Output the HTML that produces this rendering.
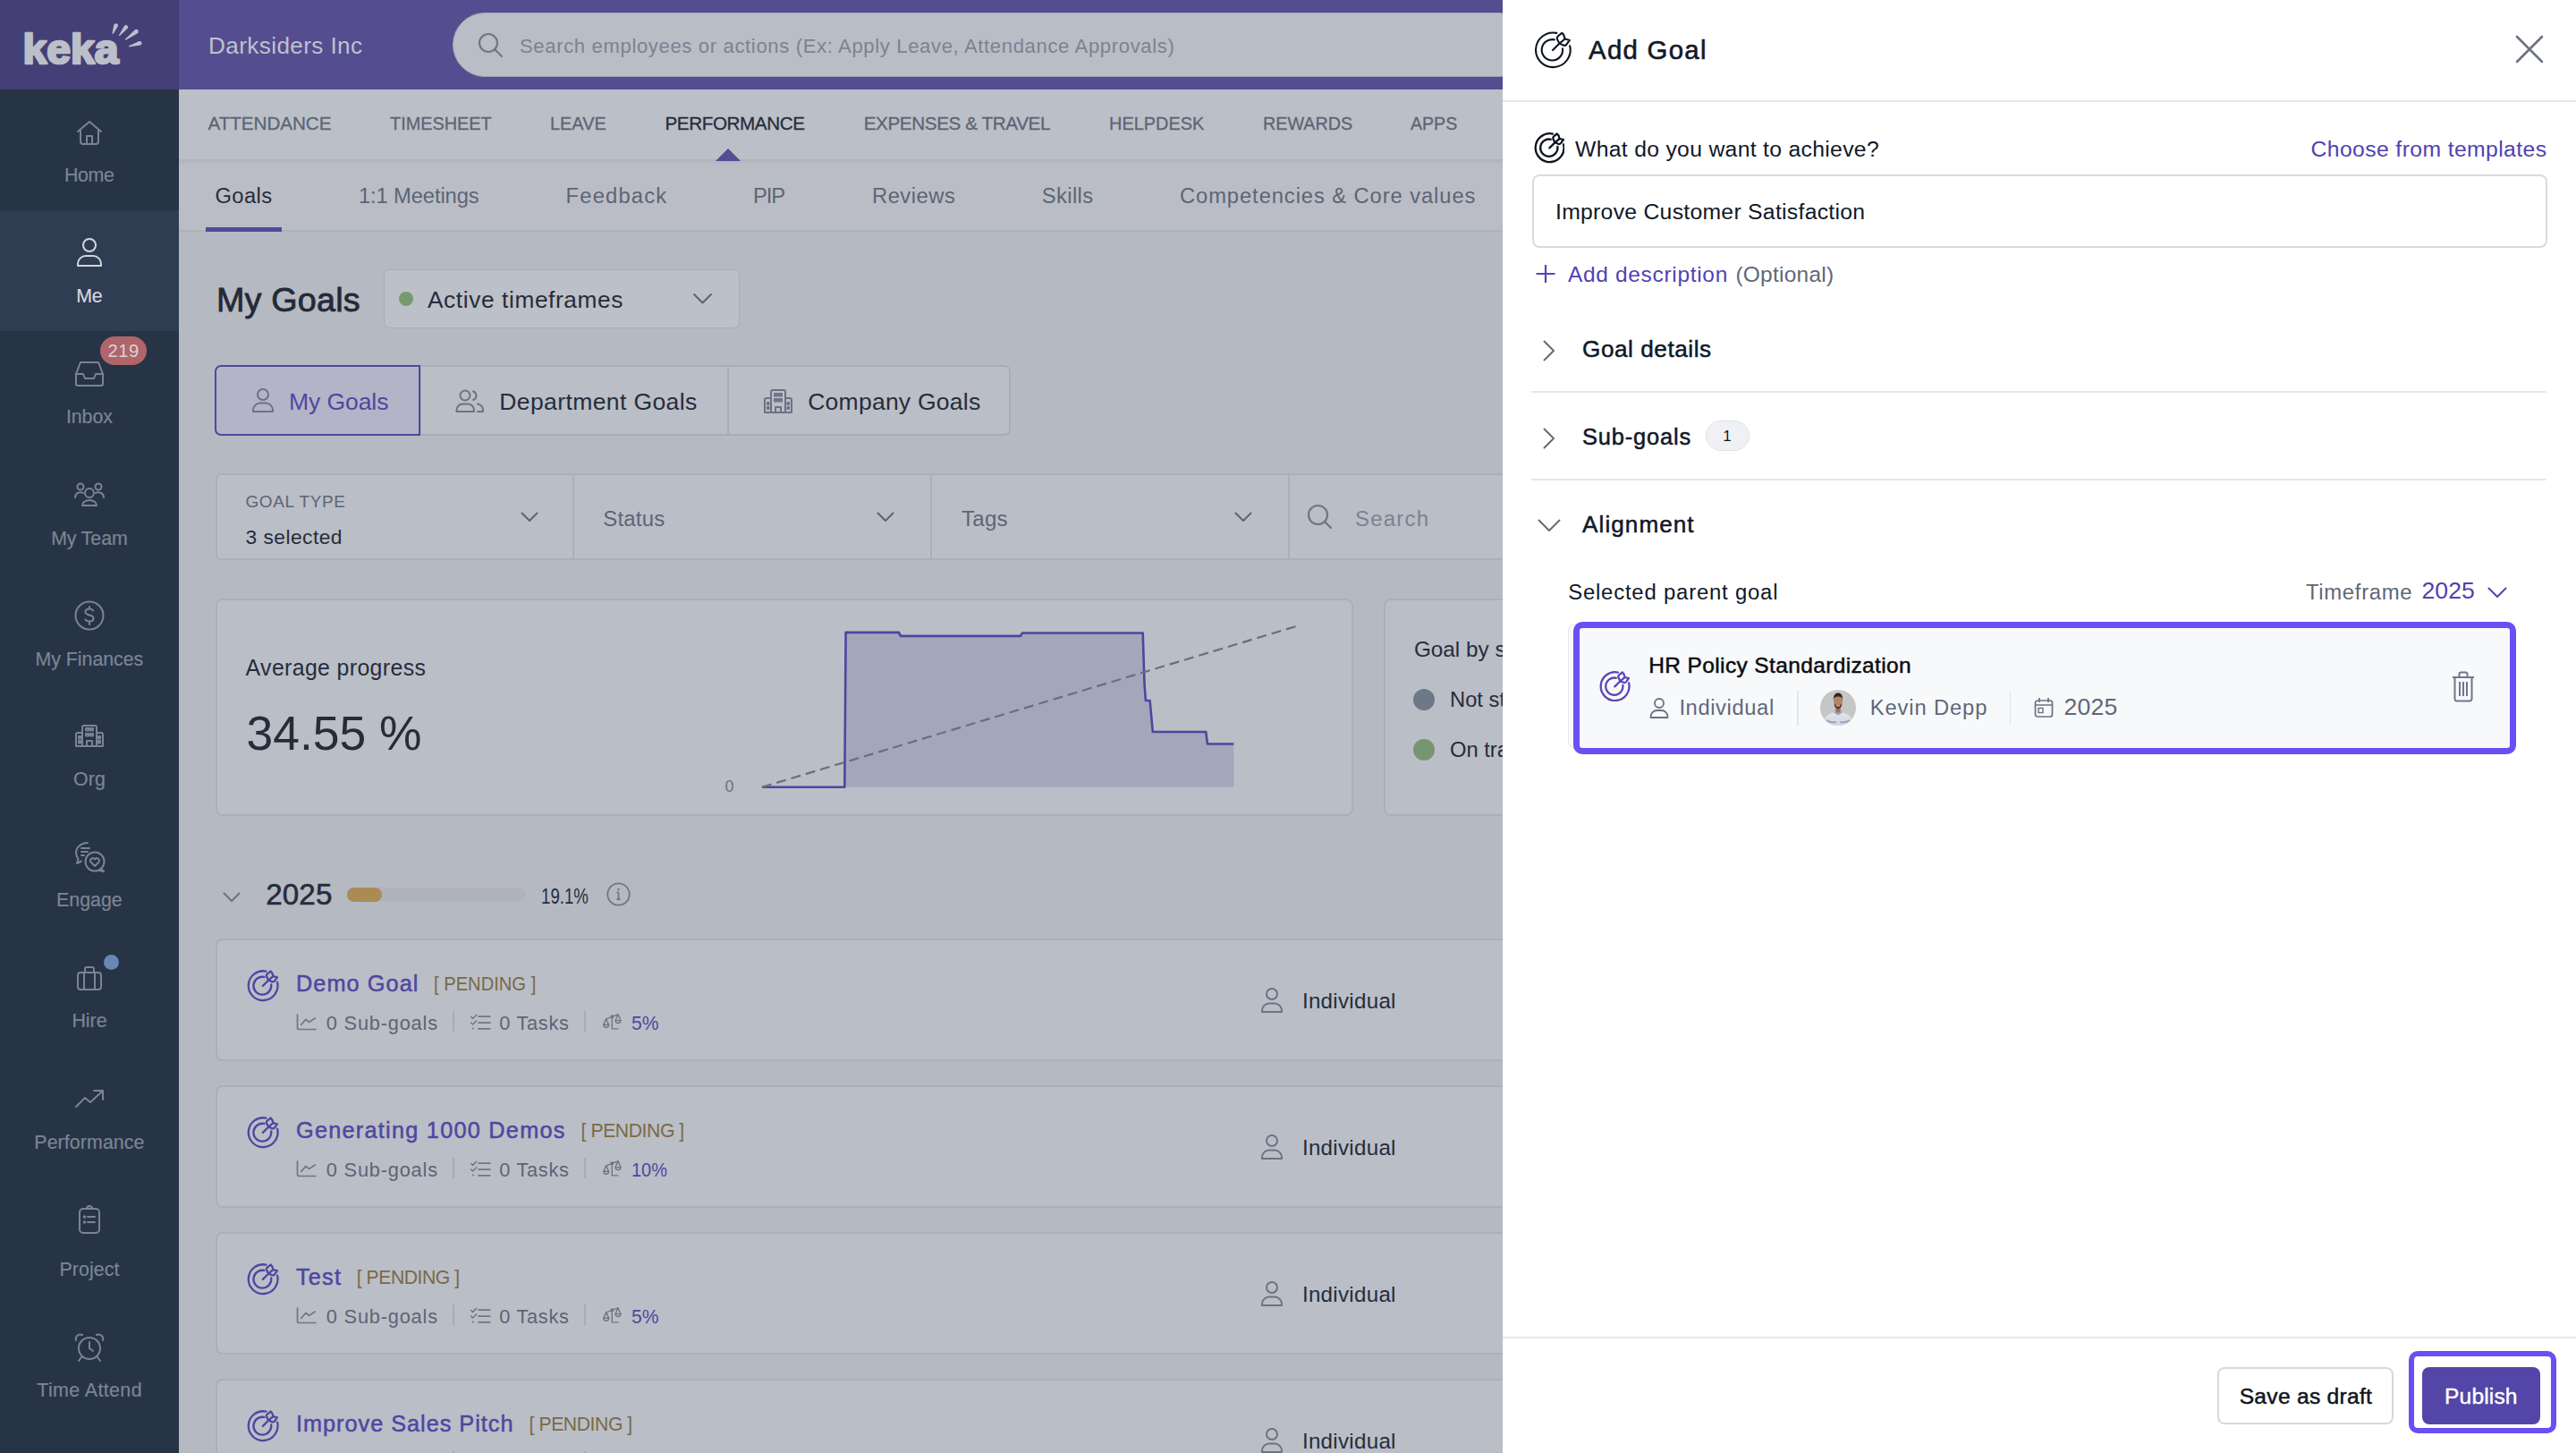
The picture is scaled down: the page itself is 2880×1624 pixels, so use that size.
<!DOCTYPE html><html><head><meta charset="utf-8"><style>
html,body{margin:0;padding:0;}
body{width:2880px;height:1624px;overflow:hidden;position:relative;background:#b5b9c2;font-family:"Liberation Sans",sans-serif;}
.t{position:absolute;white-space:nowrap;}
.b{position:absolute;box-sizing:border-box;}
@media (max-width:2000px){html{zoom:0.5;}}
</style></head><body>
<div class="b" style="left:0px;top:0px;width:2880px;height:100px;background:#544d90"></div>
<div class="b" style="left:0px;top:0px;width:200px;height:100px;background:#443f77"></div>
<div class="b" style="left:0px;top:100px;width:200px;height:1524px;background:#273446"></div>
<div class="b" style="left:0px;top:235px;width:200px;height:135px;background:#2e3d52"></div>
<svg class="b" style="left:0px;top:0px;" width="200" height="100" viewBox="0 0 200 100" fill="none"><text x="25.5" y="71" font-family="Liberation Sans" font-weight="700" font-size="46" fill="#bcbfc9" stroke="#bcbfc9" stroke-width="2.6" stroke-linejoin="round" textLength="107" lengthAdjust="spacingAndGlyphs">keka</text><path d="M126.56 37.92 L131.76 29.61 A2.4 2.4 0 0 0 127.29 27.86 L125.44 37.48 Z" fill="#bcbfc9"/><path d="M133.67 40.37 L142.69 31.87 A2.4 2.4 0 0 0 138.93 28.89 L132.73 39.63 Z" fill="#bcbfc9"/><path d="M140.46 45.08 L153.84 37.16 A2.4 2.4 0 0 0 150.94 33.34 L139.74 44.12 Z" fill="#bcbfc9"/><path d="M144.17 52.57 L156.90 50.59 A2.4 2.4 0 0 0 155.51 46.00 L143.83 51.43 Z" fill="#bcbfc9"/></svg>
<div class="t" style="left:233.00px;top:33.95px;font-size:26.12px;line-height:34px;color:#bfc2cb;letter-spacing:0.400px;">Darksiders Inc</div>
<div class="t" style="left:72.00px;top:181.60px;font-size:21.37px;line-height:28px;color:#7c8595;letter-spacing:-0.367px;-webkit-text-stroke:0.2px #7c8595;">Home</div>
<svg class="b" style="left:85px;top:134px;" width="30" height="28" viewBox="0 0 30 28" fill="none"><g stroke="#7a8494" stroke-width="2" stroke-linecap="round" stroke-linejoin="round"><path d="M2 13 L15 2 L28 13" /><path d="M5 11 V24 a3 3 0 0 0 3 3 H22 a3 3 0 0 0 3-3 V11"/><path d="M12 27 V18 H18 V27"/></g></svg>
<div class="t" style="left:85.25px;top:316.60px;font-size:21.37px;line-height:28px;color:#d3d6dc;letter-spacing:-0.200px;-webkit-text-stroke:0.2px #d3d6dc;">Me</div>
<svg class="b" style="left:85px;top:266px;" width="30" height="33" viewBox="0 0 30 33" fill="none"><g stroke="#d3d6dc" stroke-width="2" stroke-linecap="round" stroke-linejoin="round"><circle cx="15" cy="8" r="7"/><path d="M2 31 V29 a9 9 0 0 1 9-9 H19 a9 9 0 0 1 9 9 V31 Z"/></g></svg>
<div class="t" style="left:74.00px;top:451.60px;font-size:21.37px;line-height:28px;color:#7c8595;letter-spacing:-0.100px;-webkit-text-stroke:0.2px #7c8595;">Inbox</div>
<svg class="b" style="left:83px;top:403px;" width="34" height="30" viewBox="0 0 34 30" fill="none"><g stroke="#7a8494" stroke-width="2" stroke-linecap="round" stroke-linejoin="round"><path d="M7 2 H27 L32 15 V26 a2 2 0 0 1-2 2 H4 a2 2 0 0 1-2-2 V15 Z"/><path d="M2 15 H10 L12 20 H22 L24 15 H32"/></g></svg>
<div class="t" style="left:57.15px;top:587.60px;font-size:21.37px;line-height:28px;color:#7c8595;letter-spacing:-0.117px;-webkit-text-stroke:0.2px #7c8595;">My Team</div>
<svg class="b" style="left:83px;top:539px;" width="34" height="28" viewBox="0 0 34 28" fill="none"><g stroke="#7a8494" stroke-width="2" stroke-linecap="round" stroke-linejoin="round"><circle cx="17" cy="12" r="5"/><path d="M9 26 a8 6 0 0 1 16 0 Z"/><circle cx="7" cy="5" r="3.5"/><circle cx="27" cy="5" r="3.5"/><path d="M1 17 a6 6 0 0 1 9-5"/><path d="M33 17 a6 6 0 0 0-9-5"/></g></svg>
<div class="t" style="left:39.50px;top:722.60px;font-size:21.37px;line-height:28px;color:#7c8595;letter-spacing:-0.030px;-webkit-text-stroke:0.2px #7c8595;">My Finances</div>
<svg class="b" style="left:83px;top:671px;" width="34" height="34" viewBox="0 0 34 34" fill="none"><g stroke="#7a8494" stroke-width="2" stroke-linecap="round" stroke-linejoin="round"><circle cx="17" cy="17" r="15.5"/><path d="M21 11.5 a4 3.5 0 0 0-4-2 c-3 0-4.5 1.5-4.5 3.5 c0 4.5 9 2.5 9 7 c0 2-1.7 3.5-4.5 3.5 a4.5 3.5 0 0 1-4.5-2.2"/><path d="M17 7 V9.5 M17 24 V27"/></g></svg>
<div class="t" style="left:81.90px;top:856.60px;font-size:21.37px;line-height:28px;color:#7c8595;letter-spacing:0.250px;-webkit-text-stroke:0.2px #7c8595;">Org</div>
<svg class="b" style="left:84px;top:809px;" width="32" height="27" viewBox="0 0 32 27" fill="none"><g stroke="#7a8494" stroke-width="2" stroke-linecap="round" stroke-linejoin="round"><path d="M8 25 V4 a2 2 0 0 1 2-2 H22 a2 2 0 0 1 2 2 V25"/><path d="M8 10 H3 a2 2 0 0 0-2 2 V25 H31 V12 a2 2 0 0 0-2-2 H24"/><rect x="12" y="5" width="3" height="2.5"/><rect x="17" y="5" width="3" height="2.5"/><rect x="12" y="11" width="3" height="2.5"/><rect x="17" y="11" width="3" height="2.5"/><rect x="4" y="14" width="2" height="2.5"/><rect x="26" y="14" width="2" height="2.5"/><rect x="4" y="19" width="2" height="2.5"/><rect x="26" y="19" width="2" height="2.5"/><path d="M13 25 V19 H19 V25"/></g></svg>
<div class="t" style="left:63.10px;top:991.60px;font-size:21.37px;line-height:28px;color:#7c8595;letter-spacing:0.000px;-webkit-text-stroke:0.2px #7c8595;">Engage</div>
<svg class="b" style="left:82px;top:939px;" width="36" height="37" viewBox="0 0 36 37" fill="none"><g stroke="#7a8494" stroke-width="2" stroke-linecap="round" stroke-linejoin="round"><path d="M16 3 a13 11 0 0 0-13 11 c0 3 1 5 2.5 7 L4 26 L9 23.5"/><path d="M9 9 H18 M9 13 H16 M9 17 H12"/><circle cx="24" cy="24" r="10.5"/><path d="M31 32 L34 35 L29 34"/><path d="M24 29 l-4.5-4.5 a2.6 2.6 0 0 1 4.5-3 a2.6 2.6 0 0 1 4.5 3 Z"/></g></svg>
<div class="t" style="left:80.40px;top:1126.60px;font-size:21.37px;line-height:28px;color:#7c8595;letter-spacing:0.000px;-webkit-text-stroke:0.2px #7c8595;">Hire</div>
<svg class="b" style="left:85px;top:1079px;" width="30" height="28" viewBox="0 0 30 28" fill="none"><g stroke="#7a8494" stroke-width="2" stroke-linecap="round" stroke-linejoin="round"><rect x="2" y="8" width="26" height="19" rx="3"/><path d="M10 8 V4 a2 2 0 0 1 2-2 H18 a2 2 0 0 1 2 2 V8"/><path d="M9 8 V27 M21 8 V27"/></g></svg>
<div class="t" style="left:38.30px;top:1262.60px;font-size:21.37px;line-height:28px;color:#7c8595;letter-spacing:0.090px;-webkit-text-stroke:0.2px #7c8595;">Performance</div>
<svg class="b" style="left:83px;top:1217px;" width="34" height="22" viewBox="0 0 34 22" fill="none"><g stroke="#7a8494" stroke-width="2" stroke-linecap="round" stroke-linejoin="round"><path d="M2 20 L12 10 L18 15 L31 3"/><path d="M22 2 H32 V12"/></g></svg>
<div class="t" style="left:66.50px;top:1404.60px;font-size:21.37px;line-height:28px;color:#7c8595;letter-spacing:0.067px;-webkit-text-stroke:0.2px #7c8595;">Project</div>
<svg class="b" style="left:87px;top:1346px;" width="26" height="34" viewBox="0 0 26 34" fill="none"><g stroke="#7a8494" stroke-width="2" stroke-linecap="round" stroke-linejoin="round"><rect x="2" y="5" width="22" height="27" rx="4"/><path d="M9 5 H17 M10 5 a3 3 0 0 1 6 0"/><circle cx="7.5" cy="14" r="0.8"/><circle cx="7.5" cy="20" r="0.8"/><path d="M11 14 H19 M11 20 H19"/></g></svg>
<div class="t" style="left:41.25px;top:1539.60px;font-size:21.37px;line-height:28px;color:#7c8595;letter-spacing:0.410px;-webkit-text-stroke:0.2px #7c8595;">Time Attend</div>
<svg class="b" style="left:83px;top:1489px;" width="34" height="34" viewBox="0 0 34 34" fill="none"><g stroke="#7a8494" stroke-width="2" stroke-linecap="round" stroke-linejoin="round"><circle cx="17" cy="18" r="12"/><path d="M17 11 V18 L21 21"/><path d="M2 9 a5 5 0 0 1 7-6"/><path d="M32 9 a5 5 0 0 0-7-6"/><path d="M8 28 L5 32 M26 28 L29 32"/></g></svg>
<div class="b" style="left:112px;top:376px;width:52px;height:32px;background:#b0656a;border-radius:16px"></div>
<div class="t" style="left:120.50px;top:378.98px;font-size:20.25px;line-height:26px;color:#d8d3d6;letter-spacing:0.550px;">219</div>
<div class="b" style="left:116px;top:1067px;width:17px;height:17px;background:#6787b5;border-radius:50%"></div>
<div class="b" style="left:506px;top:14px;width:1206px;height:72px;background:#b9bdc6;border-radius:36px;border:1.5px solid #a3a6b2"></div>
<svg class="b" style="left:534px;top:36px;" width="30" height="30" viewBox="0 0 30 30" fill="none"><circle cx="12" cy="12" r="10" stroke="#6f7786" stroke-width="2.2"/><path d="M19.5 19.5 L27 27" stroke="#6f7786" stroke-width="2.2" stroke-linecap="round"/></svg>
<div class="t" style="left:581.00px;top:37.45px;font-size:22.07px;line-height:29px;color:#7b8392;letter-spacing:0.645px;">Search employees or actions (Ex: Apply Leave, Attendance Approvals)</div>
<div class="b" style="left:200px;top:100px;width:1480px;height:78px;background:#bbbfc7"></div>
<div class="b" style="left:200px;top:178px;width:1480px;height:81px;background:#babdc6;border-bottom:2px solid #adb1ba"></div>
<div class="b" style="left:200px;top:178px;width:1480px;height:6px;background:linear-gradient(#aeb2bb,rgba(186,189,198,0))"></div>
<div class="t" style="left:232.60px;top:124.44px;font-size:20.67px;line-height:27px;color:#5c6575;letter-spacing:-0.067px;-webkit-text-stroke:0.3px #5c6575;">ATTENDANCE</div>
<div class="t" style="left:436.00px;top:124.44px;font-size:20.67px;line-height:27px;color:#5c6575;letter-spacing:0.000px;-webkit-text-stroke:0.3px #5c6575;transform:scaleX(0.9620);transform-origin:0 0;">TIMESHEET</div>
<div class="t" style="left:615.20px;top:124.44px;font-size:20.67px;line-height:27px;color:#5c6575;letter-spacing:0.000px;-webkit-text-stroke:0.3px #5c6575;transform:scaleX(0.9632);transform-origin:0 0;">LEAVE</div>
<div class="t" style="left:743.50px;top:124.44px;font-size:20.67px;line-height:27px;color:#262d3a;letter-spacing:-0.420px;-webkit-text-stroke:0.3px #262d3a;">PERFORMANCE</div>
<div class="t" style="left:965.70px;top:124.44px;font-size:20.67px;line-height:27px;color:#5c6575;letter-spacing:-0.394px;-webkit-text-stroke:0.3px #5c6575;">EXPENSES & TRAVEL</div>
<div class="t" style="left:1240.00px;top:124.44px;font-size:20.67px;line-height:27px;color:#5c6575;letter-spacing:0.000px;-webkit-text-stroke:0.3px #5c6575;transform:scaleX(0.9638);transform-origin:0 0;">HELPDESK</div>
<div class="t" style="left:1411.60px;top:124.44px;font-size:20.67px;line-height:27px;color:#5c6575;letter-spacing:0.000px;-webkit-text-stroke:0.3px #5c6575;transform:scaleX(0.9562);transform-origin:0 0;">REWARDS</div>
<div class="t" style="left:1577.00px;top:124.44px;font-size:20.67px;line-height:27px;color:#5c6575;letter-spacing:0.000px;-webkit-text-stroke:0.3px #5c6575;transform:scaleX(0.9475);transform-origin:0 0;">APPS</div>
<svg class="b" style="left:800px;top:166px;" width="28" height="14" viewBox="0 0 28 14" fill="none"><path d="M0 14 L14 0 L28 14 Z" fill="#544d90"/></svg>
<div class="t" style="left:240.40px;top:203.57px;font-size:23.74px;line-height:31px;color:#262d3a;letter-spacing:0.425px">Goals</div>
<div class="t" style="left:401.00px;top:203.57px;font-size:23.74px;line-height:31px;color:#5c6575;letter-spacing:-0.118px">1:1 Meetings</div>
<div class="t" style="left:632.60px;top:203.57px;font-size:23.74px;line-height:31px;color:#5c6575;letter-spacing:1.186px">Feedback</div>
<div class="t" style="left:842.00px;top:203.57px;font-size:23.74px;line-height:31px;color:#5c6575;letter-spacing:-1.100px">PIP</div>
<div class="t" style="left:975.00px;top:203.57px;font-size:23.74px;line-height:31px;color:#5c6575;letter-spacing:0.517px">Reviews</div>
<div class="t" style="left:1164.80px;top:203.57px;font-size:23.74px;line-height:31px;color:#5c6575;letter-spacing:0.380px">Skills</div>
<div class="t" style="left:1319.00px;top:203.57px;font-size:23.74px;line-height:31px;color:#5c6575;letter-spacing:0.920px">Competencies &amp; Core values</div>
<div class="b" style="left:230px;top:254px;width:85px;height:5px;background:#514a9c"></div>
<div class="t" style="left:242.00px;top:311.03px;font-size:37.71px;line-height:49px;color:#232a37;letter-spacing:0.200px;-webkit-text-stroke:0.8px #232a37;">My Goals</div>
<div class="b" style="left:429px;top:301px;width:398px;height:66px;background:#bcc0c8;border:1.5px solid #a9adb6;border-radius:6px"></div>
<div class="b" style="left:446px;top:326px;width:16px;height:16px;background:#789a6f;border-radius:50%"></div>
<div class="t" style="left:478.00px;top:318.00px;font-size:26.26px;line-height:34px;color:#262d3a;letter-spacing:0.613px;">Active timeframes</div>
<svg class="b" style="left:774px;top:327px;" width="23" height="14" viewBox="0 0 23 14" fill="none"><path d="M2 2 L11.5 11.5 L21 2" stroke="#5c6575" stroke-width="2" stroke-linecap="round" stroke-linejoin="round"/></svg>
<div class="b" style="left:240px;top:408px;width:890px;height:79px;background:#babec7;border:2px solid #a9adb6;border-radius:7px"></div>
<div class="b" style="left:469px;top:410px;width:1.5px;height:75px;background:#a9adb6"></div>
<div class="b" style="left:813px;top:410px;width:1.5px;height:75px;background:#a9adb6"></div>
<div class="b" style="left:240px;top:408px;width:230px;height:79px;background:#b3b4c7;border:2px solid #4f479f;border-radius:7px 0 0 7px"></div>
<svg class="b" style="left:281px;top:434px;" width="26" height="27" viewBox="0 0 26 27" fill="none"><circle cx="13" cy="7" r="6" stroke="#6c7282" stroke-width="2"/><path d="M2 26 V24.5 a8 8 0 0 1 8-8 H16 a8 8 0 0 1 8 8 V26 Z" stroke="#6c7282" stroke-width="2" stroke-linejoin="round"/></svg>
<div class="t" style="left:322.90px;top:432.31px;font-size:26.54px;line-height:34px;color:#4e47a0;letter-spacing:-0.071px;">My Goals</div>
<svg class="b" style="left:509px;top:435px;" width="33" height="26" viewBox="0 0 33 26" fill="none"><circle cx="11" cy="7" r="5.5" stroke="#6c7282" stroke-width="2"/><path d="M1.5 25 V23.5 a7 7 0 0 1 7-7 H14 a7 7 0 0 1 7 7 V25 Z" stroke="#6c7282" stroke-width="2" stroke-linejoin="round"/><path d="M20 2.5 a5 5 0 0 1 0 9.5" stroke="#6c7282" stroke-width="2" stroke-linecap="round"/><path d="M25 16.5 a7 7 0 0 1 6 7 V25 H25" stroke="#6c7282" stroke-width="2" stroke-linecap="round" stroke-linejoin="round"/></svg>
<div class="t" style="left:558.20px;top:432.31px;font-size:26.54px;line-height:34px;color:#262d3a;letter-spacing:0.387px;">Department Goals</div>
<svg class="b" style="left:854px;top:434px;" width="32" height="28" viewBox="0 0 32 28" fill="none"><g stroke="#6c7282" stroke-width="2" stroke-linejoin="round"><path d="M8 27 V4 a2 2 0 0 1 2-2 H22 a2 2 0 0 1 2 2 V27"/><path d="M8 11 H3 a2 2 0 0 0-2 2 V27 H31 V13 a2 2 0 0 0-2-2 H24"/><rect x="12" y="6" width="3" height="2.5"/><rect x="17" y="6" width="3" height="2.5"/><rect x="12" y="12" width="3" height="2.5"/><rect x="17" y="12" width="3" height="2.5"/><rect x="4" y="16" width="1.5" height="2"/><rect x="26.5" y="16" width="1.5" height="2"/><rect x="4" y="21" width="1.5" height="2"/><rect x="26.5" y="21" width="1.5" height="2"/><path d="M13 27 V21 H19 V27"/></g></svg>
<div class="t" style="left:903.20px;top:432.31px;font-size:26.54px;line-height:34px;color:#262d3a;letter-spacing:0.233px;">Company Goals</div>
<div class="b" style="left:241px;top:529px;width:1500px;height:97px;background:#babec7;border:2px solid #abafb8;border-radius:6px"></div>
<div class="b" style="left:640px;top:531px;width:1.5px;height:93px;background:#abafb8"></div>
<div class="b" style="left:1040px;top:531px;width:1.5px;height:93px;background:#abafb8"></div>
<div class="b" style="left:1440px;top:531px;width:1.5px;height:93px;background:#abafb8"></div>
<div class="t" style="left:274.50px;top:548.42px;font-size:18.99px;line-height:25px;color:#5c6575;letter-spacing:0.600px;">GOAL TYPE</div>
<div class="t" style="left:274.50px;top:584.61px;font-size:22.77px;line-height:30px;color:#262d3a;letter-spacing:0.467px;">3 selected</div>
<svg class="b" style="left:582px;top:572px;" width="20" height="12" viewBox="0 0 20 12" fill="none"><path d="M1.5 1.5 L10 10 L18.5 1.5" stroke="#5c6575" stroke-width="2" stroke-linecap="round" stroke-linejoin="round"/></svg>
<div class="t" style="left:674.20px;top:563.98px;font-size:24.02px;line-height:31px;color:#5c6575;letter-spacing:0.200px;">Status</div>
<svg class="b" style="left:980px;top:572px;" width="20" height="12" viewBox="0 0 20 12" fill="none"><path d="M1.5 1.5 L10 10 L18.5 1.5" stroke="#5c6575" stroke-width="2" stroke-linecap="round" stroke-linejoin="round"/></svg>
<div class="t" style="left:1075.00px;top:563.98px;font-size:24.02px;line-height:31px;color:#5c6575;letter-spacing:0.267px;">Tags</div>
<svg class="b" style="left:1380px;top:572px;" width="20" height="12" viewBox="0 0 20 12" fill="none"><path d="M1.5 1.5 L10 10 L18.5 1.5" stroke="#5c6575" stroke-width="2" stroke-linecap="round" stroke-linejoin="round"/></svg>
<svg class="b" style="left:1461px;top:563px;" width="30" height="30" viewBox="0 0 30 30" fill="none"><circle cx="12.5" cy="12.5" r="10.5" stroke="#6f7786" stroke-width="2.2"/><path d="M20 20 L27 27" stroke="#6f7786" stroke-width="2.2" stroke-linecap="round"/></svg>
<div class="t" style="left:1515.00px;top:563.98px;font-size:24.02px;line-height:31px;color:#7b8392;letter-spacing:1.200px;">Search</div>
<div class="b" style="left:241px;top:669px;width:1272px;height:243px;background:#babec7;border:2px solid #abafb8;border-radius:8px"></div>
<div class="b" style="left:1547px;top:669px;width:400px;height:243px;background:#babec7;border:2px solid #abafb8;border-radius:8px"></div>
<div class="t" style="left:274.60px;top:730.39px;font-size:24.86px;line-height:32px;color:#262d3a;letter-spacing:0.367px;">Average progress</div>
<div class="t" style="left:275.60px;top:785.20px;font-size:53.40px;line-height:69px;color:#262d3a;letter-spacing:-0.017px;">34.55 %</div>
<div class="t" style="left:810.60px;top:868.01px;font-size:17.88px;line-height:23px;color:#6b7280;letter-spacing:0.000px;">0</div>
<svg class="b" style="left:0px;top:0px;" width="1600" height="1000" viewBox="0 0 1600 1000" fill="none"><polygon points="944.3,879.8 944.3,879.8 945.6,706.9 1005,706.9 1006.8,710.9 1141,710.9 1143,707.5 1277.7,707.5 1279.5,764.5 1280.9,783 1285.6,783 1288.8,818 1348.2,818 1350,831.5 1379.3,831.5 1379.3,879.8" fill="#a4a6ba"/><polyline points="851.9,879.8 944.3,879.8 945.6,706.9 1005,706.9 1006.8,710.9 1141,710.9 1143,707.5 1277.7,707.5 1279.5,764.5 1280.9,783 1285.6,783 1288.8,818 1348.2,818 1350,831.5 1379.3,831.5" stroke="#4d469f" stroke-width="2.6" fill="none" stroke-linejoin="round"/><line x1="851.9" y1="879.8" x2="1449.8" y2="699.8" stroke="#6a6f7b" stroke-width="2.2" stroke-dasharray="11 6"/></svg>
<div class="t" style="left:1580.90px;top:710.38px;font-size:24.30px;line-height:32px;color:#262d3a;letter-spacing:0.000px;">Goal by status</div>
<div class="b" style="left:1580px;top:770px;width:24px;height:24px;background:#6f7889;border-radius:50%"></div>
<div class="t" style="left:1621.00px;top:767.47px;font-size:23.74px;line-height:31px;color:#262d3a;letter-spacing:0.000px;">Not started</div>
<div class="b" style="left:1580px;top:826px;width:24px;height:24px;background:#769671;border-radius:50%"></div>
<div class="t" style="left:1621.00px;top:823.27px;font-size:23.74px;line-height:31px;color:#262d3a;letter-spacing:0.000px;">On track</div>
<svg class="b" style="left:249px;top:997px;" width="20" height="12" viewBox="0 0 20 12" fill="none"><path d="M1.5 1.5 L10 10 L18.5 1.5" stroke="#6b7382" stroke-width="2" stroke-linecap="round" stroke-linejoin="round"/></svg>
<div class="t" style="left:297.20px;top:978.01px;font-size:33.16px;line-height:43px;color:#262d3a;letter-spacing:0.133px;-webkit-text-stroke:0.6px #262d3a;">2025</div>
<div class="b" style="left:388px;top:992px;width:200px;height:16px;background:#b0b3bc;border-radius:8px"></div>
<div class="b" style="left:388px;top:992px;width:39px;height:16px;background:#a98b53;border-radius:8px"></div>
<div class="t" style="left:605.40px;top:985.52px;font-size:23.88px;line-height:31px;color:#262d3a;letter-spacing:0.000px;transform:scaleX(0.7817);transform-origin:0 0;">19.1%</div>
<svg class="b" style="left:678px;top:986px;" width="27" height="27" viewBox="0 0 27 27" fill="none"><circle cx="13.5" cy="13.5" r="12.2" stroke="#6f7786" stroke-width="1.8"/><path d="M13.5 11.5 V19 M11.5 19 H15.5 M11.5 11.5 H13.5" stroke="#6f7786" stroke-width="1.8"/><circle cx="13.5" cy="8" r="1.2" fill="#6f7786"/></svg>
<div class="b" style="left:241px;top:1049px;width:1500px;height:137px;background:#babec7;border:2px solid #abafb8;border-radius:8px"></div>
<svg class="b" style="left:276.15px;top:1084.15px;" width="35.7" height="35.7" viewBox="-1 -1 42 42" fill="none"><g stroke="#4e47a0" stroke-width="2.706" stroke-linecap="round" stroke-linejoin="round" fill="none"><path d="M24.3 0.9 A19.3 19.3 0 1 0 39.1 15.2" /><path d="M21.8 8.4 A11.7 11.7 0 1 0 31 18.4"/><path d="M20 20 L27.6 12.5"/><path d="M27.4 12.6 L24.8 7.4 Q24.6 5.6 25.8 4.4 L30.3 0.8 L32.4 3.3 L33.6 7.5 L38.9 8.9 L35.4 13.7 Q34.3 15 32.5 14.8 L27.4 12.6 Z"/><path d="M33.6 7.5 L27.6 12.5"/></g></svg>
<div class="t" style="left:331.00px;top:1082.74px;font-size:25.28px;line-height:33px;color:#4e47a0;letter-spacing:1.075px;-webkit-text-stroke:0.5px #4e47a0;">Demo Goal</div>
<div class="t" style="left:485.40px;top:1086.44px;font-size:21.23px;line-height:28px;color:#7a6a45;letter-spacing:0.000px;transform:scaleX(0.9501);transform-origin:0 0;">[ PENDING ]</div>
<svg class="b" style="left:331px;top:1132.5px;" width="24" height="19" viewBox="0 0 24 19" fill="none"><g transform="translate(1,1)" stroke="#6f7786" fill="none" stroke-linecap="round" stroke-linejoin="round"><path d="M0.5 0 V14.5 a2 2 0 0 0 2 2 H21" stroke-width="1.7"/><path d="M4.7 11.4 L9.9 5.5 L13.6 8.4 L20.2 4" stroke-width="1.7"/></g></svg>
<div class="t" style="left:364.80px;top:1129.75px;font-size:21.79px;line-height:28px;color:#5c6575;letter-spacing:0.800px;">0 Sub-goals</div>
<div class="b" style="left:506.3px;top:1130px;width:1.3px;height:23.4px;background:#a7abb4"></div>
<svg class="b" style="left:525px;top:1132.5px;" width="24" height="19" viewBox="0 0 24 19" fill="none"><g transform="translate(1,1)" stroke="#6f7786" fill="none" stroke-linecap="round" stroke-linejoin="round"><path d="M0.7 2.5 L2.6 4.4 L6.6 0.3 M0.7 9.1 L2.6 11 L6.6 6.9" stroke-width="1.5"/><circle cx="2.9" cy="15.6" r="1" fill="#6f7786" stroke="none"/><path d="M9 2.1 H21.8 M9 9.1 H21.8 M9 15.8 H21.8" stroke-width="1.7"/></g></svg>
<div class="t" style="left:558.30px;top:1129.75px;font-size:21.79px;line-height:28px;color:#5c6575;letter-spacing:0.700px;">0 Tasks</div>
<div class="b" style="left:653.3px;top:1130px;width:1.3px;height:23.4px;background:#a7abb4"></div>
<svg class="b" style="left:673px;top:1132px;" width="23" height="19" viewBox="0 0 23 19" fill="none"><g transform="translate(1,1)" stroke="#6f7786" fill="none" stroke-linecap="round" stroke-linejoin="round" stroke-width="1.4"><path d="M3.7 5.9 L17 0.8"/><circle cx="10.3" cy="3.3" r="1.3"/><path d="M10.3 4.6 V16.9 H17"/><path d="M3.7 5.9 L0.8 12.3 H6.6 Z"/><path d="M0.8 12.3 a2.9 2.9 0 0 0 5.8 0"/><path d="M17 0.8 L14.1 7.6 H19.9 Z"/><path d="M14.1 7.6 a2.9 2.9 0 0 0 5.8 0"/></g></svg>
<div class="t" style="left:706.00px;top:1129.75px;font-size:21.79px;line-height:28px;color:#4e47a0;letter-spacing:0.000px;transform:scaleX(0.9683);transform-origin:0 0;">5%</div>
<svg class="b" style="left:1409px;top:1104px;" width="26" height="28" viewBox="0 0 26 28" fill="none"><circle cx="13" cy="7" r="6" stroke="#6c7282" stroke-width="2"/><path d="M2 27 V25.5 a8 8 0 0 1 8-8 H16 a8 8 0 0 1 8 8 V27 Z" stroke="#6c7282" stroke-width="2" stroke-linejoin="round"/></svg>
<div class="t" style="left:1455.90px;top:1103.13px;font-size:24.16px;line-height:31px;color:#262d3a;letter-spacing:0.278px;">Individual</div>
<div class="b" style="left:241px;top:1213px;width:1500px;height:137px;background:#babec7;border:2px solid #abafb8;border-radius:8px"></div>
<svg class="b" style="left:276.15px;top:1248.15px;" width="35.7" height="35.7" viewBox="-1 -1 42 42" fill="none"><g stroke="#4e47a0" stroke-width="2.706" stroke-linecap="round" stroke-linejoin="round" fill="none"><path d="M24.3 0.9 A19.3 19.3 0 1 0 39.1 15.2" /><path d="M21.8 8.4 A11.7 11.7 0 1 0 31 18.4"/><path d="M20 20 L27.6 12.5"/><path d="M27.4 12.6 L24.8 7.4 Q24.6 5.6 25.8 4.4 L30.3 0.8 L32.4 3.3 L33.6 7.5 L38.9 8.9 L35.4 13.7 Q34.3 15 32.5 14.8 L27.4 12.6 Z"/><path d="M33.6 7.5 L27.6 12.5"/></g></svg>
<div class="t" style="left:331.00px;top:1246.74px;font-size:25.28px;line-height:33px;color:#4e47a0;letter-spacing:1.255px;-webkit-text-stroke:0.5px #4e47a0;">Generating 1000 Demos</div>
<div class="t" style="left:649.60px;top:1250.44px;font-size:21.23px;line-height:28px;color:#7a6a45;letter-spacing:-0.460px;">[ PENDING ]</div>
<svg class="b" style="left:331px;top:1296.5px;" width="24" height="19" viewBox="0 0 24 19" fill="none"><g transform="translate(1,1)" stroke="#6f7786" fill="none" stroke-linecap="round" stroke-linejoin="round"><path d="M0.5 0 V14.5 a2 2 0 0 0 2 2 H21" stroke-width="1.7"/><path d="M4.7 11.4 L9.9 5.5 L13.6 8.4 L20.2 4" stroke-width="1.7"/></g></svg>
<div class="t" style="left:364.80px;top:1293.75px;font-size:21.79px;line-height:28px;color:#5c6575;letter-spacing:0.800px;">0 Sub-goals</div>
<div class="b" style="left:506.3px;top:1294px;width:1.3px;height:23.4px;background:#a7abb4"></div>
<svg class="b" style="left:525px;top:1296.5px;" width="24" height="19" viewBox="0 0 24 19" fill="none"><g transform="translate(1,1)" stroke="#6f7786" fill="none" stroke-linecap="round" stroke-linejoin="round"><path d="M0.7 2.5 L2.6 4.4 L6.6 0.3 M0.7 9.1 L2.6 11 L6.6 6.9" stroke-width="1.5"/><circle cx="2.9" cy="15.6" r="1" fill="#6f7786" stroke="none"/><path d="M9 2.1 H21.8 M9 9.1 H21.8 M9 15.8 H21.8" stroke-width="1.7"/></g></svg>
<div class="t" style="left:558.30px;top:1293.75px;font-size:21.79px;line-height:28px;color:#5c6575;letter-spacing:0.700px;">0 Tasks</div>
<div class="b" style="left:653.3px;top:1294px;width:1.3px;height:23.4px;background:#a7abb4"></div>
<svg class="b" style="left:673px;top:1296px;" width="23" height="19" viewBox="0 0 23 19" fill="none"><g transform="translate(1,1)" stroke="#6f7786" fill="none" stroke-linecap="round" stroke-linejoin="round" stroke-width="1.4"><path d="M3.7 5.9 L17 0.8"/><circle cx="10.3" cy="3.3" r="1.3"/><path d="M10.3 4.6 V16.9 H17"/><path d="M3.7 5.9 L0.8 12.3 H6.6 Z"/><path d="M0.8 12.3 a2.9 2.9 0 0 0 5.8 0"/><path d="M17 0.8 L14.1 7.6 H19.9 Z"/><path d="M14.1 7.6 a2.9 2.9 0 0 0 5.8 0"/></g></svg>
<div class="t" style="left:706.00px;top:1293.75px;font-size:21.79px;line-height:28px;color:#4e47a0;letter-spacing:0.000px;transform:scaleX(0.9174);transform-origin:0 0;">10%</div>
<svg class="b" style="left:1409px;top:1268px;" width="26" height="28" viewBox="0 0 26 28" fill="none"><circle cx="13" cy="7" r="6" stroke="#6c7282" stroke-width="2"/><path d="M2 27 V25.5 a8 8 0 0 1 8-8 H16 a8 8 0 0 1 8 8 V27 Z" stroke="#6c7282" stroke-width="2" stroke-linejoin="round"/></svg>
<div class="t" style="left:1455.90px;top:1267.13px;font-size:24.16px;line-height:31px;color:#262d3a;letter-spacing:0.278px;">Individual</div>
<div class="b" style="left:241px;top:1377px;width:1500px;height:137px;background:#babec7;border:2px solid #abafb8;border-radius:8px"></div>
<svg class="b" style="left:276.15px;top:1412.15px;" width="35.7" height="35.7" viewBox="-1 -1 42 42" fill="none"><g stroke="#4e47a0" stroke-width="2.706" stroke-linecap="round" stroke-linejoin="round" fill="none"><path d="M24.3 0.9 A19.3 19.3 0 1 0 39.1 15.2" /><path d="M21.8 8.4 A11.7 11.7 0 1 0 31 18.4"/><path d="M20 20 L27.6 12.5"/><path d="M27.4 12.6 L24.8 7.4 Q24.6 5.6 25.8 4.4 L30.3 0.8 L32.4 3.3 L33.6 7.5 L38.9 8.9 L35.4 13.7 Q34.3 15 32.5 14.8 L27.4 12.6 Z"/><path d="M33.6 7.5 L27.6 12.5"/></g></svg>
<div class="t" style="left:331.00px;top:1410.74px;font-size:25.28px;line-height:33px;color:#4e47a0;letter-spacing:1.200px;-webkit-text-stroke:0.5px #4e47a0;">Test</div>
<div class="t" style="left:398.80px;top:1414.44px;font-size:21.23px;line-height:28px;color:#7a6a45;letter-spacing:-0.490px;">[ PENDING ]</div>
<svg class="b" style="left:331px;top:1460.5px;" width="24" height="19" viewBox="0 0 24 19" fill="none"><g transform="translate(1,1)" stroke="#6f7786" fill="none" stroke-linecap="round" stroke-linejoin="round"><path d="M0.5 0 V14.5 a2 2 0 0 0 2 2 H21" stroke-width="1.7"/><path d="M4.7 11.4 L9.9 5.5 L13.6 8.4 L20.2 4" stroke-width="1.7"/></g></svg>
<div class="t" style="left:364.80px;top:1457.75px;font-size:21.79px;line-height:28px;color:#5c6575;letter-spacing:0.800px;">0 Sub-goals</div>
<div class="b" style="left:506.3px;top:1458px;width:1.3px;height:23.4px;background:#a7abb4"></div>
<svg class="b" style="left:525px;top:1460.5px;" width="24" height="19" viewBox="0 0 24 19" fill="none"><g transform="translate(1,1)" stroke="#6f7786" fill="none" stroke-linecap="round" stroke-linejoin="round"><path d="M0.7 2.5 L2.6 4.4 L6.6 0.3 M0.7 9.1 L2.6 11 L6.6 6.9" stroke-width="1.5"/><circle cx="2.9" cy="15.6" r="1" fill="#6f7786" stroke="none"/><path d="M9 2.1 H21.8 M9 9.1 H21.8 M9 15.8 H21.8" stroke-width="1.7"/></g></svg>
<div class="t" style="left:558.30px;top:1457.75px;font-size:21.79px;line-height:28px;color:#5c6575;letter-spacing:0.700px;">0 Tasks</div>
<div class="b" style="left:653.3px;top:1458px;width:1.3px;height:23.4px;background:#a7abb4"></div>
<svg class="b" style="left:673px;top:1460px;" width="23" height="19" viewBox="0 0 23 19" fill="none"><g transform="translate(1,1)" stroke="#6f7786" fill="none" stroke-linecap="round" stroke-linejoin="round" stroke-width="1.4"><path d="M3.7 5.9 L17 0.8"/><circle cx="10.3" cy="3.3" r="1.3"/><path d="M10.3 4.6 V16.9 H17"/><path d="M3.7 5.9 L0.8 12.3 H6.6 Z"/><path d="M0.8 12.3 a2.9 2.9 0 0 0 5.8 0"/><path d="M17 0.8 L14.1 7.6 H19.9 Z"/><path d="M14.1 7.6 a2.9 2.9 0 0 0 5.8 0"/></g></svg>
<div class="t" style="left:706.00px;top:1457.75px;font-size:21.79px;line-height:28px;color:#4e47a0;letter-spacing:0.000px;transform:scaleX(0.9683);transform-origin:0 0;">5%</div>
<svg class="b" style="left:1409px;top:1432px;" width="26" height="28" viewBox="0 0 26 28" fill="none"><circle cx="13" cy="7" r="6" stroke="#6c7282" stroke-width="2"/><path d="M2 27 V25.5 a8 8 0 0 1 8-8 H16 a8 8 0 0 1 8 8 V27 Z" stroke="#6c7282" stroke-width="2" stroke-linejoin="round"/></svg>
<div class="t" style="left:1455.90px;top:1431.13px;font-size:24.16px;line-height:31px;color:#262d3a;letter-spacing:0.278px;">Individual</div>
<div class="b" style="left:241px;top:1541px;width:1500px;height:137px;background:#babec7;border:2px solid #abafb8;border-radius:8px"></div>
<svg class="b" style="left:276.15px;top:1576.15px;" width="35.7" height="35.7" viewBox="-1 -1 42 42" fill="none"><g stroke="#4e47a0" stroke-width="2.706" stroke-linecap="round" stroke-linejoin="round" fill="none"><path d="M24.3 0.9 A19.3 19.3 0 1 0 39.1 15.2" /><path d="M21.8 8.4 A11.7 11.7 0 1 0 31 18.4"/><path d="M20 20 L27.6 12.5"/><path d="M27.4 12.6 L24.8 7.4 Q24.6 5.6 25.8 4.4 L30.3 0.8 L32.4 3.3 L33.6 7.5 L38.9 8.9 L35.4 13.7 Q34.3 15 32.5 14.8 L27.4 12.6 Z"/><path d="M33.6 7.5 L27.6 12.5"/></g></svg>
<div class="t" style="left:331.00px;top:1574.74px;font-size:25.28px;line-height:33px;color:#4e47a0;letter-spacing:0.989px;-webkit-text-stroke:0.5px #4e47a0;">Improve Sales Pitch</div>
<div class="t" style="left:591.60px;top:1578.44px;font-size:21.23px;line-height:28px;color:#7a6a45;letter-spacing:-0.460px;">[ PENDING ]</div>
<svg class="b" style="left:331px;top:1624.5px;" width="24" height="19" viewBox="0 0 24 19" fill="none"><g transform="translate(1,1)" stroke="#6f7786" fill="none" stroke-linecap="round" stroke-linejoin="round"><path d="M0.5 0 V14.5 a2 2 0 0 0 2 2 H21" stroke-width="1.7"/><path d="M4.7 11.4 L9.9 5.5 L13.6 8.4 L20.2 4" stroke-width="1.7"/></g></svg>
<div class="t" style="left:364.80px;top:1621.75px;font-size:21.79px;line-height:28px;color:#5c6575;letter-spacing:0.800px;">0 Sub-goals</div>
<div class="b" style="left:506.3px;top:1622px;width:1.3px;height:23.4px;background:#a7abb4"></div>
<svg class="b" style="left:525px;top:1624.5px;" width="24" height="19" viewBox="0 0 24 19" fill="none"><g transform="translate(1,1)" stroke="#6f7786" fill="none" stroke-linecap="round" stroke-linejoin="round"><path d="M0.7 2.5 L2.6 4.4 L6.6 0.3 M0.7 9.1 L2.6 11 L6.6 6.9" stroke-width="1.5"/><circle cx="2.9" cy="15.6" r="1" fill="#6f7786" stroke="none"/><path d="M9 2.1 H21.8 M9 9.1 H21.8 M9 15.8 H21.8" stroke-width="1.7"/></g></svg>
<div class="t" style="left:558.30px;top:1621.75px;font-size:21.79px;line-height:28px;color:#5c6575;letter-spacing:0.700px;">0 Tasks</div>
<div class="b" style="left:653.3px;top:1622px;width:1.3px;height:23.4px;background:#a7abb4"></div>
<svg class="b" style="left:673px;top:1624px;" width="23" height="19" viewBox="0 0 23 19" fill="none"><g transform="translate(1,1)" stroke="#6f7786" fill="none" stroke-linecap="round" stroke-linejoin="round" stroke-width="1.4"><path d="M3.7 5.9 L17 0.8"/><circle cx="10.3" cy="3.3" r="1.3"/><path d="M10.3 4.6 V16.9 H17"/><path d="M3.7 5.9 L0.8 12.3 H6.6 Z"/><path d="M0.8 12.3 a2.9 2.9 0 0 0 5.8 0"/><path d="M17 0.8 L14.1 7.6 H19.9 Z"/><path d="M14.1 7.6 a2.9 2.9 0 0 0 5.8 0"/></g></svg>
<div class="t" style="left:706.00px;top:1621.75px;font-size:21.79px;line-height:28px;color:#4e47a0;letter-spacing:0.000px;transform:scaleX(0.9683);transform-origin:0 0;">5%</div>
<svg class="b" style="left:1409px;top:1596px;" width="26" height="28" viewBox="0 0 26 28" fill="none"><circle cx="13" cy="7" r="6" stroke="#6c7282" stroke-width="2"/><path d="M2 27 V25.5 a8 8 0 0 1 8-8 H16 a8 8 0 0 1 8 8 V27 Z" stroke="#6c7282" stroke-width="2" stroke-linejoin="round"/></svg>
<div class="t" style="left:1455.90px;top:1595.13px;font-size:24.16px;line-height:31px;color:#262d3a;letter-spacing:0.278px;">Individual</div>
<div class="b" style="left:1680px;top:0px;width:1200px;height:1624px;background:#ffffff"></div>
<div class="b" style="left:1680px;top:112px;width:1200px;height:2px;background:#e6e7eb"></div>
<svg class="b" style="left:1715.0px;top:35.0px;" width="42.0" height="42.0" viewBox="-1 -1 42 42" fill="none"><g stroke="#0f1420" stroke-width="2.100" stroke-linecap="round" stroke-linejoin="round" fill="none"><path d="M24.3 0.9 A19.3 19.3 0 1 0 39.1 15.2" /><path d="M21.8 8.4 A11.7 11.7 0 1 0 31 18.4"/><path d="M20 20 L27.6 12.5"/><path d="M27.4 12.6 L24.8 7.4 Q24.6 5.6 25.8 4.4 L30.3 0.8 L32.4 3.3 L33.6 7.5 L38.9 8.9 L35.4 13.7 Q34.3 15 32.5 14.8 L27.4 12.6 Z"/><path d="M33.6 7.5 L27.6 12.5"/></g></svg>
<div class="t" style="left:1776.00px;top:37.44px;font-size:29.33px;line-height:38px;color:#101828;letter-spacing:1.314px;-webkit-text-stroke:0.6px #101828;">Add Goal</div>
<svg class="b" style="left:2812px;top:39px;" width="32" height="32" viewBox="0 0 32 32" fill="none"><path d="M2 2 L30 30 M30 2 L2 30" stroke="#6b7280" stroke-width="2.6" stroke-linecap="round"/></svg>
<svg class="b" style="left:1714.67px;top:148.18px;" width="34.65" height="34.65" viewBox="-1 -1 42 42" fill="none"><g stroke="#0f1420" stroke-width="2.788" stroke-linecap="round" stroke-linejoin="round" fill="none"><path d="M24.3 0.9 A19.3 19.3 0 1 0 39.1 15.2" /><path d="M21.8 8.4 A11.7 11.7 0 1 0 31 18.4"/><path d="M20 20 L27.6 12.5"/><path d="M27.4 12.6 L24.8 7.4 Q24.6 5.6 25.8 4.4 L30.3 0.8 L32.4 3.3 L33.6 7.5 L38.9 8.9 L35.4 13.7 Q34.3 15 32.5 14.8 L27.4 12.6 Z"/><path d="M33.6 7.5 L27.6 12.5"/></g></svg>
<div class="t" style="left:1761.00px;top:150.83px;font-size:24.72px;line-height:32px;color:#101828;letter-spacing:0.315px;">What do you want to achieve?</div>
<div class="t" style="left:2583.50px;top:150.53px;font-size:24.72px;line-height:32px;color:#4f42b2;letter-spacing:0.400px;">Choose from templates</div>
<div class="b" style="left:1712.5px;top:194.5px;width:1135px;height:82.5px;border:2px solid #d9dae0;border-radius:8px"></div>
<div class="t" style="left:1739.00px;top:220.73px;font-size:24.72px;line-height:32px;color:#101828;letter-spacing:0.289px;">Improve Customer Satisfaction</div>
<svg class="b" style="left:1716px;top:295px;" width="24" height="22" viewBox="0 0 24 22" fill="none"><path d="M12 1 V21 M1.5 11 H22.5" stroke="#5546b5" stroke-width="2.2"/></svg>
<div class="t" style="left:1752.90px;top:290.73px;font-size:24.44px;line-height:32px;color:#4f42b2;letter-spacing:0.707px;">Add description</div>
<div class="t" style="left:1940.40px;top:290.73px;font-size:24.44px;line-height:32px;color:#5f6878;letter-spacing:0.267px;">(Optional)</div>
<svg class="b" style="left:1725px;top:379.5px;" width="14" height="24" viewBox="0 0 14 24" fill="none"><path d="M1.5 1.5 L12 12 L1.5 22.5" stroke="#6b6b6b" stroke-width="2" stroke-linecap="round" stroke-linejoin="round" fill="none"/></svg>
<div class="t" style="left:1769.10px;top:373.25px;font-size:26.12px;line-height:34px;color:#101828;letter-spacing:0.555px;-webkit-text-stroke:0.5px #101828;">Goal details</div>
<div class="b" style="left:1712px;top:437px;width:1135px;height:2px;background:#e6e7eb"></div>
<svg class="b" style="left:1725px;top:477.5px;" width="14" height="24" viewBox="0 0 14 24" fill="none"><path d="M1.5 1.5 L12 12 L1.5 22.5" stroke="#6b6b6b" stroke-width="2" stroke-linecap="round" stroke-linejoin="round" fill="none"/></svg>
<div class="t" style="left:1769.10px;top:471.59px;font-size:25.42px;line-height:33px;color:#101828;letter-spacing:0.825px;-webkit-text-stroke:0.5px #101828;">Sub-goals</div>
<div class="b" style="left:1906.5px;top:470px;width:49px;height:33.5px;background:#f0f1f4;border:1.5px solid #e1e3e8;border-radius:17px"></div>
<div class="t" style="left:1926.25px;top:477.00px;font-size:17.04px;line-height:22px;color:#101828;letter-spacing:0.000px;">1</div>
<div class="b" style="left:1712px;top:535px;width:1135px;height:2px;background:#e6e7eb"></div>
<svg class="b" style="left:1719px;top:580px;" width="26" height="15" viewBox="0 0 26 15" fill="none"><path d="M1.5 1.5 L13 13 L24.5 1.5" stroke="#6b6b6b" stroke-width="2" stroke-linecap="round" stroke-linejoin="round" fill="none"/></svg>
<div class="t" style="left:1769.10px;top:569.15px;font-size:26.12px;line-height:34px;color:#101828;letter-spacing:1.050px;-webkit-text-stroke:0.5px #101828;">Alignment</div>
<div class="t" style="left:1753.20px;top:646.32px;font-size:23.88px;line-height:31px;color:#101828;letter-spacing:0.805px;">Selected parent goal</div>
<div class="t" style="left:2577.90px;top:646.22px;font-size:23.88px;line-height:31px;color:#5f6878;letter-spacing:0.688px;">Timeframe</div>
<div class="t" style="left:2707.50px;top:643.28px;font-size:26.62px;line-height:35px;color:#4f42b2;letter-spacing:0.033px;">2025</div>
<svg class="b" style="left:2781px;top:656px;" width="22" height="14" viewBox="0 0 22 14" fill="none"><path d="M1.5 1.5 L11 11 L20.5 1.5" stroke="#5546b5" stroke-width="2" stroke-linecap="round" stroke-linejoin="round" fill="none"/></svg>
<div class="b" style="left:1752.5px;top:697px;width:1058px;height:140px;background:#f8f9fb;border:1.5px solid #e6e8ec;border-radius:8px"></div>
<svg class="b" style="left:1788.17px;top:749.67px;" width="34.65" height="34.65" viewBox="-1 -1 42 42" fill="none"><g stroke="#5847b6" stroke-width="2.788" stroke-linecap="round" stroke-linejoin="round" fill="none"><path d="M24.3 0.9 A19.3 19.3 0 1 0 39.1 15.2" /><path d="M21.8 8.4 A11.7 11.7 0 1 0 31 18.4"/><path d="M20 20 L27.6 12.5"/><path d="M27.4 12.6 L24.8 7.4 Q24.6 5.6 25.8 4.4 L30.3 0.8 L32.4 3.3 L33.6 7.5 L38.9 8.9 L35.4 13.7 Q34.3 15 32.5 14.8 L27.4 12.6 Z"/><path d="M33.6 7.5 L27.6 12.5"/></g></svg>
<div class="t" style="left:1843.30px;top:727.73px;font-size:24.44px;line-height:32px;color:#0b0d12;letter-spacing:0.396px;-webkit-text-stroke:0.5px #0b0d12;">HR Policy Standardization</div>
<svg class="b" style="left:1844px;top:780px;" width="22" height="23" viewBox="0 0 22 23" fill="none"><circle cx="11" cy="6" r="5" stroke="#697282" stroke-width="1.8"/><path d="M1.5 22 V21 a7 7 0 0 1 7-7 H13.5 a7 7 0 0 1 7 7 V22 Z" stroke="#697282" stroke-width="1.8" stroke-linejoin="round"/></svg>
<div class="t" style="left:1877.40px;top:776.17px;font-size:23.74px;line-height:31px;color:#5f6878;letter-spacing:0.611px;">Individual</div>
<div class="b" style="left:2009px;top:771.5px;width:1.5px;height:39px;background:#e3e5e9"></div>
<svg class="b" style="left:2035px;top:771px;" width="40" height="40" viewBox="0 0 40 40" fill="none"><defs><clipPath id="av"><circle cx="20" cy="20" r="20"/></clipPath><linearGradient id="sh" x1="0" y1="0" x2="0" y2="1"><stop offset="0" stop-color="#e4e6ee"/><stop offset="1" stop-color="#cfd4e0"/></linearGradient></defs><g clip-path="url(#av)"><rect width="40" height="40" fill="#c6c6c6"/><path d="M3 42 C4 30 8 27 15 25.5 L20 24 L25 25.5 C32 27 36 30 37 42 Z" fill="url(#sh)"/><path d="M7 34 C10 36 14 37 18 36 M33 34 C30 36 26 37 22 36" stroke="#9ea7ba" stroke-width="2.2" fill="none"/><path d="M15.5 25.8 L20 28.5 L24.5 25.8 L23.5 23.5 H16.5 Z" fill="#9aa6bb"/><path d="M17.3 19 V23.8 L20 26 L22.7 23.8 V19 Z" fill="#a07058"/><ellipse cx="20" cy="13.2" rx="4.9" ry="6.6" fill="#b28369"/><path d="M15.6 15.5 C16 20 18 21.2 20 21.2 C22 21.2 24 20 24.4 15.5 C23 17.5 17 17.5 15.6 15.5 Z" fill="#5e3c2e"/><path d="M14.9 12 C14.6 5.5 17 3.6 20 3.6 C23 3.6 25.4 5.5 25.1 12 C24.6 8.5 23 7.6 20 7.6 C17 7.6 15.4 8.5 14.9 12 Z" fill="#2b2320"/><path d="M18 17.8 H22" stroke="#e8ded8" stroke-width="1"/></g></svg>
<div class="t" style="left:2090.70px;top:776.17px;font-size:23.74px;line-height:31px;color:#5f6878;letter-spacing:0.889px;">Kevin Depp</div>
<div class="b" style="left:2246.5px;top:771.5px;width:1.5px;height:39px;background:#e3e5e9"></div>
<svg class="b" style="left:2274px;top:779px;" width="23" height="24" viewBox="0 0 23 24" fill="none"><rect x="1.5" y="4" width="19" height="18" rx="2.5" stroke="#697282" stroke-width="1.7"/><path d="M6 1 V6 M16 1 V6 M1.5 9 H20.5" stroke="#697282" stroke-width="1.7"/><rect x="5" y="12.5" width="5" height="5" stroke="#697282" stroke-width="1.4"/></svg>
<div class="t" style="left:2307.60px;top:773.19px;font-size:26.59px;line-height:35px;color:#5f6878;letter-spacing:0.167px;">2025</div>
<svg class="b" style="left:2740px;top:750px;" width="28" height="35" viewBox="0 0 28 35" fill="none"><path d="M2 7 H26" stroke="#6f7787" stroke-width="2"/><path d="M9.5 7 V3.5 a2 2 0 0 1 2-2 H16.5 a2 2 0 0 1 2 2 V7" stroke="#6f7787" stroke-width="2"/><path d="M4.5 7 V31 a2.5 2.5 0 0 0 2.5 2.5 H21 a2.5 2.5 0 0 0 2.5-2.5 V7" stroke="#6f7787" stroke-width="2"/><path d="M10 12 V28 M14 12 V28 M18 12 V28" stroke="#6f7787" stroke-width="2"/></svg>
<div class="b" style="left:1759.4px;top:695px;width:1053.2px;height:147.6px;border:7.3px solid #6a4ff5;border-radius:10px"></div>
<div class="b" style="left:1680px;top:1494px;width:1200px;height:2px;background:#e6e7eb"></div>
<div class="b" style="left:2479.2px;top:1528.4px;width:196.4px;height:63.3px;border:2px solid #d7d8de;border-radius:8px;background:#fff"></div>
<div class="t" style="left:2503.70px;top:1544.88px;font-size:24.58px;line-height:32px;color:#0f1523;letter-spacing:0.283px;-webkit-text-stroke:0.5px #0f1523;">Save as draft</div>
<div class="b" style="left:2707.8px;top:1528.1px;width:132.1px;height:63.6px;background:#5446a8;border-radius:8px"></div>
<div class="t" style="left:2733.10px;top:1544.88px;font-size:24.58px;line-height:32px;color:#ffffff;letter-spacing:0.133px;-webkit-text-stroke:0.4px #ffffff;">Publish</div>
<div class="b" style="left:2692.8px;top:1510.2px;width:165.4px;height:91.8px;border:6.8px solid #6a4ff5;border-radius:10px"></div>
</body></html>
